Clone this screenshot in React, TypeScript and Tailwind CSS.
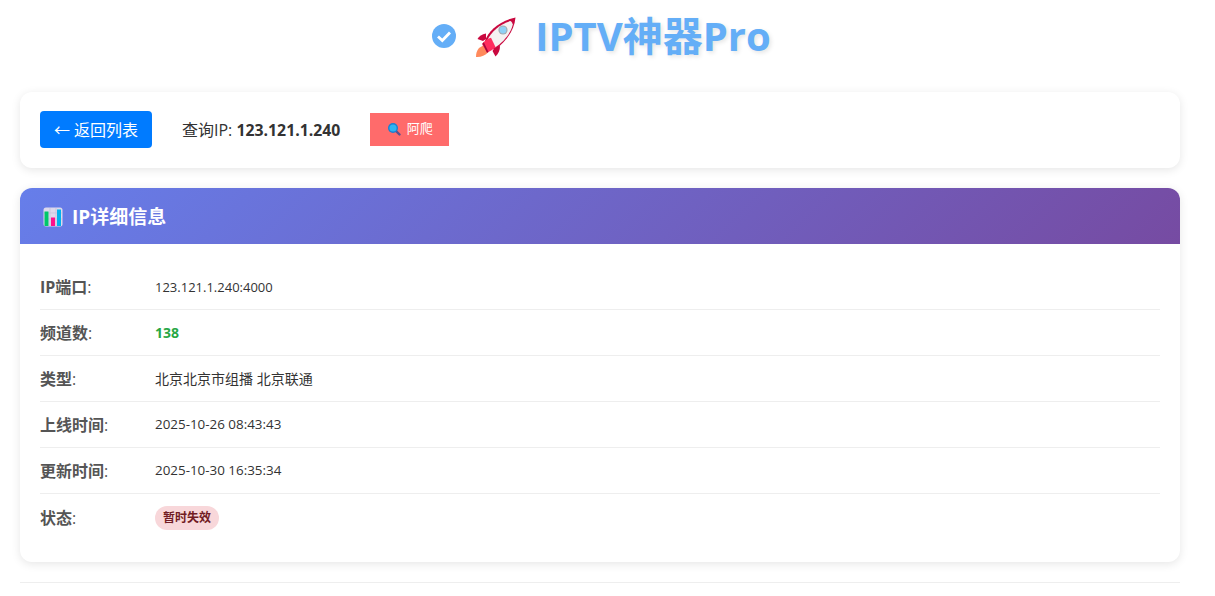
function Rocket() {
  return (
    <svg width="50" height="46" viewBox="0 0 50 46" className="shrink-0">
      <path d="M8 34 C5.500 37 5 40 5 43 C9 43.500 14 42 17.500 38 L13 31 Z" fill="#ff8a5c" />
      <path d="M15 19.500 C11 20.500 8 22 6.500 25 L12 27 L15 25 Z" fill="#c9083f" />
      <path d="M29 32 C29 36 27.500 40 24.500 42.500 L21.500 37 L24 33 Z" fill="#c9083f" />
      <path d="M14 27 C17 17 29 6.500 44.500 3.500 C43.500 16 35 28 23.500 36 Z" fill="#c9083f" />
      <path d="M16.200 26.500 C19.500 18 30 9.500 39.500 7 C41 8 41.500 9.500 41.800 10.500 C39.500 20 32 28.500 24 33.500 Z" fill="#f5f1f1" />
      <path d="M11 30 C13.500 27 17 24.500 20 23.800 L24.500 33 C22.500 35.500 19 37.500 16 38.500 Z" fill="#ff2d5f" />
      <path d="M11.500 29.500 L12.800 28.300 L17.500 38 L16 38.700 Z" fill="#a3083a" />
      <circle cx="32" cy="16" r="4.600" fill="#a3abb0" />
      <circle cx="32" cy="16" r="3.400" fill="#8fd0f5" />
    </svg>
  );
}
function Chart() {
  return (
    <svg width="20" height="20" viewBox="0 0 20 20" className="shrink-0">
      <rect x="0.500" y="0.500" width="19" height="19" rx="2.500" fill="#dcd8ec" />
      <path d="M7 1 V19 M13 1 V19 M1 6 H19 M1 12 H19" stroke="#c4bedb" strokeWidth="0.700" />
      <rect x="1.500" y="4.500" width="4" height="14.500" fill="#00c76a" />
      <rect x="8" y="10.500" width="4" height="8.500" fill="#ff0f8c" />
      <rect x="14" y="2.500" width="4" height="16.500" fill="#00b2ee" />
    </svg>
  );
}
function Magnifier() {
  return (
    <svg width="14" height="14" viewBox="0 0 14 14" className="shrink-0">
      <path d="M8.500 8.500 L12.500 12.500" stroke="#5a4f8f" strokeWidth="2.400" strokeLinecap="round" />
      <circle cx="6" cy="6" r="5" fill="#1b7fd1" />
      <circle cx="6" cy="6" r="3.600" fill="#2fb4f2" />
    </svg>
  );
}
function Row({ label, children, last }: { label: string; children: React.ReactNode; last?: boolean }) {
  return (
    <div className={`flex items-center h-[46px] ${last ? "pt-[2px]" : "border-b border-[#eeeeee]"}`}>
      <div className="w-[115px] shrink-0 text-base font-bold text-[#555555]">{label}<span className="font-normal">:</span></div>
      <div className="text-sm text-[#333333]">{children}</div>
    </div>
  );
}
export default function App() {
  return (
    <div className="min-h-[596px] bg-white pl-5 pr-[35px] overflow-hidden" style={{ fontFamily: '"Open Sans","Noto Sans CJK SC",sans-serif' }}>
      <h1 className="flex items-center justify-center h-[72px] pl-[3px] text-[40px] font-bold text-[#64aef7] [text-shadow:2px_2px_4px_rgba(0,0,0,0.1)]">
        <svg width="24" height="24" viewBox="0 0 24 24" className="mr-[15px] shrink-0 -mt-[1px]">
          <circle cx="12" cy="12" r="12" fill="#64aef7" />
          <path d="M6 12.500 L10.300 16.500 L18 8.500" fill="none" stroke="#ffffff" strokeWidth="2.800" />
        </svg>
        <span className="mr-[14px] mt-[1px] flex"><Rocket /></span>
        <span className="leading-none">IPTV神器Pro</span>
      </h1>
      <div className="mt-5 h-[76px] flex items-center rounded-xl bg-white px-5 pb-[2px] shadow-[0_2px_10px_rgba(0,0,0,0.1)]">
        <button className="h-[37px] w-[112px] rounded bg-[#007bff] pt-[1px] text-base text-white">← 返回列表</button>
        <div className="ml-[30px] mt-[2px] text-base text-[#333333]">查询IP: <strong className="font-bold text-[15.8px]">123.121.1.240</strong></div>
        <button className="ml-[30px] h-[33px] w-[79px] flex items-center justify-center gap-[6px] bg-[#ff6b6b] text-[13px] text-white">
          <Magnifier /><span>阿爬</span>
        </button>
      </div>
      <div className="mt-5 h-[374px] rounded-xl bg-white overflow-hidden shadow-[0_2px_10px_rgba(0,0,0,0.1)]">
        <div className="h-14 flex items-center gap-[9px] px-[23px] pt-[2px] bg-[linear-gradient(135deg,#667eea,#764ba2)] text-white text-[19px] font-bold">
          <Chart /><span>IP详细信息</span>
        </div>
        <div className="px-5 pt-5">
          <Row label="IP端口"><span className="text-[13px]">123.121.1.240:4000</span></Row>
          <Row label="频道数"><span className="block pt-[1px] text-sm font-bold text-[#28a745]">138</span></Row>
          <Row label="类型">北京北京市组播 北京联通</Row>
          <Row label="上线时间"><span className="block pt-[1px] text-[13.4px]">2025-10-26 08:43:43</span></Row>
          <Row label="更新时间"><span className="block pt-[1px] text-[13.4px]">2025-10-30 16:35:34</span></Row>
          <Row label="状态" last>
            <span className="inline-flex h-6 items-center rounded-xl bg-[#f8d7da] px-2 text-xs font-bold text-[#721c24]">暂时失效</span>
          </Row>
        </div>
      </div>
      <div className="mt-5 border-t border-[#eeeeee]"></div>
    </div>
  );
}
